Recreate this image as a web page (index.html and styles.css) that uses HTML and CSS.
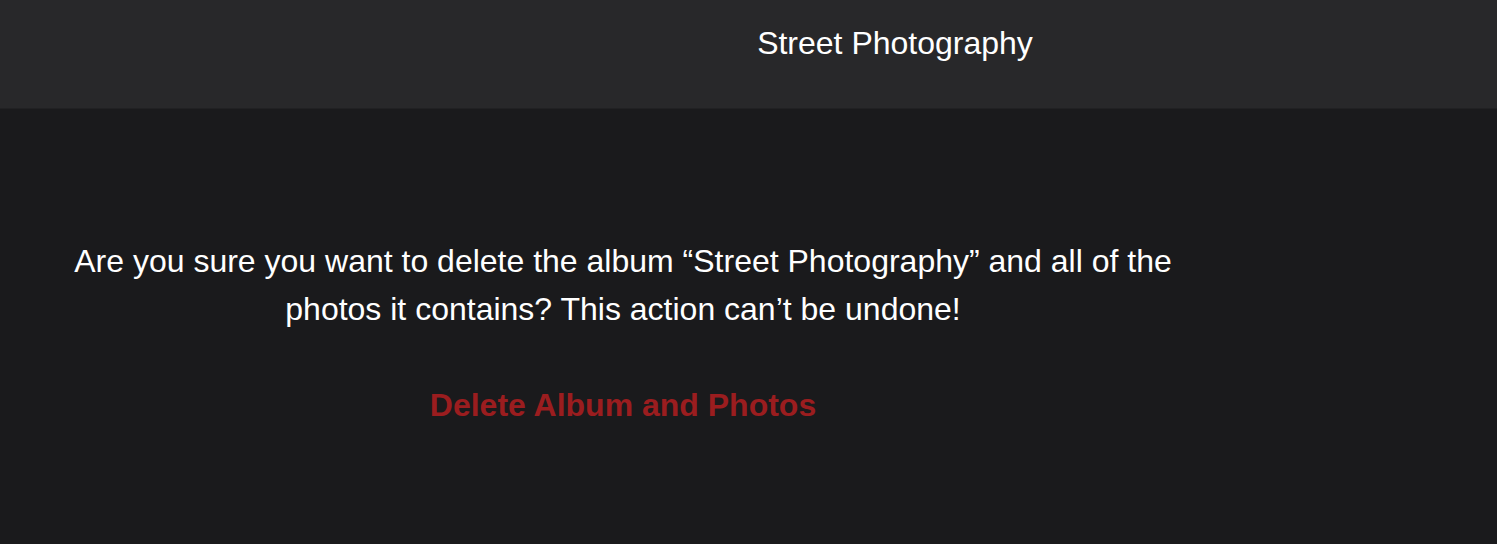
FILE: index.html
```html
<!DOCTYPE html>
<html lang="en">
<head>
<meta charset="utf-8">
<title>Street Photography</title>
<link rel="stylesheet" href="styles.css">
</head>
<body>
<header class="topbar">
  <h1 class="title">Street Photography</h1>
</header>
<main class="main">
  <section class="confirm">
    <p class="message">Are you sure you want to delete the album “Street Photography” and all of the photos it contains? This action can’t be undone!</p>
    <button class="danger" type="button">Delete Album and Photos</button>
  </section>
</main>
</body>
</html>
```

FILE: styles.css
```css
* { box-sizing: border-box; }
html, body { margin: 0; padding: 0; }
body {
  width: 1497px;
  height: 544px;
  overflow: hidden;
  background: #1a1a1c;
  color: #ffffff;
  font-family: "Liberation Sans", Arial, sans-serif;
}
.topbar {
  height: 109px;
  background: #28282a;
  border-bottom: 1px solid #212123;
  display: flex;
  justify-content: center;
  padding: 19px 0 0 293px;
}
.title {
  margin: 0;
  font-size: 32px;
  font-weight: 400;
  line-height: 48px;
}
.main {
  display: flex;
  padding: 128px 251px 0 0;
}
.confirm {
  flex: 1;
  display: flex;
  flex-direction: column;
  align-items: center;
  padding: 0 40px;
  gap: 48px;
}
.message {
  margin: 0;
  font-size: 32px;
  line-height: 48px;
  text-align: center;
}
.danger {
  background: none;
  border: none;
  padding: 0;
  margin: 0;
  font-family: inherit;
  font-size: 32px;
  font-weight: 700;
  line-height: 48px;
  color: #9b1d1f;
  cursor: pointer;
}
```
